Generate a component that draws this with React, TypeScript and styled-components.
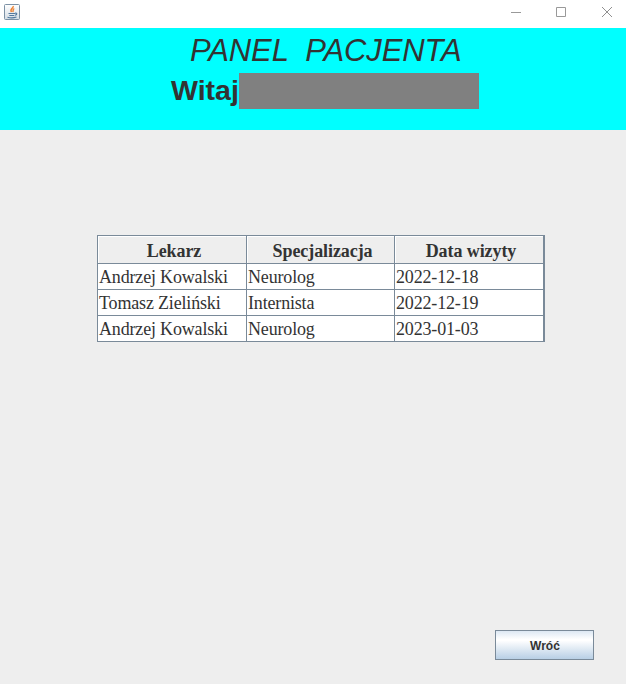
import React from "react";
import styled, { createGlobalStyle } from "styled-components";

const Global = createGlobalStyle`
  * { box-sizing: border-box; }
  body { margin: 0; background: #fff; overflow: hidden; }
`;

const Window = styled.div`
  width: 627px;
  height: 686px;
  display: flex;
  flex-direction: column;
  background: #fff;
  color: #333;
  font-family: "Liberation Sans", Arial, sans-serif;
`;

const TitleBar = styled.header`
  height: 28px;
  flex: none;
  display: flex;
  justify-content: space-between;
  padding: 4px 14px 0 4px;
`;

const Controls = styled.div`
  display: flex;
  gap: 34px;
  padding-top: 3px;
  svg { display: block; }
`;

const Content = styled.main`
  width: 626px;
  height: 656px;
  display: flex;
  flex-direction: column;
  background: #eee;
`;

const Banner = styled.section`
  height: 102px;
  flex: none;
  background: #00ffff;
`;

const Title = styled.h1`
  margin: 0;
  padding: 4px 0 0 190px;
  height: 45px;
  font-size: 31px;
  line-height: 37px;
  font-weight: 400;
  font-style: italic;
  letter-spacing: -0.12px;
  white-space: pre;
`;

const Greeting = styled.div`
  display: flex;
  padding-left: 171px;
  height: 36px;
  font-size: 28.5px;
  line-height: 35px;
  font-weight: 700;
`;

const GreetingText = styled.span`
  width: 68px;
  white-space: nowrap;
`;

const NameBox = styled.div`
  width: 240px;
  height: 36px;
  background: #808080;
`;

const Table = styled.div`
  width: 448px;
  height: 107px;
  margin: 105px 0 0 97px;
  border: solid #7a8a99;
  border-width: 1px 1px 0 1px;
  font-family: "Liberation Serif", "Times New Roman", serif;
  font-size: 18px;
`;

const Row = styled.div`
  display: grid;
  grid-template-columns: 149px 148px 149px;
`;

const HeaderCell = styled.div`
  height: 28px;
  border: solid #7a8a99;
  border-width: 0 1px 1px 0;
  box-shadow: inset 1px 1px #fff;
  padding-top: 1px;
  font-weight: 700;
  line-height: 28px;
  text-align: center;
  padding-left: 4px;
  letter-spacing: -0.08px;
`;

const Cell = styled.div`
  height: 26px;
  border: solid #7a8a99;
  border-width: 0 1px 1px 0;
  background: #fff;
  padding-left: 1px;
  line-height: 26px;
  letter-spacing: -0.17px;
  white-space: nowrap;
`;

const BackButton = styled.button`
  width: 99px;
  height: 30px;
  margin: auto 32px 24px auto;
  padding: 1px 0 0 1px;
  border: 1px solid #7a8a99;
  background: linear-gradient(#dde8f3 0%, #fff 30%, #fff 34%, #b8cfe5 100%);
  color: #333;
  font: 700 12px/28px "Liberation Sans", Arial, sans-serif;
`;

const JavaIcon = () => (
  <svg width="16" height="16" viewBox="0 0 16 16" fill="none">
    <defs>
      <linearGradient id="tile" x2="0" y2="1">
        <stop stopColor="#fff" />
        <stop offset="1" stopColor="#d5dde5" />
      </linearGradient>
    </defs>
    <rect x=".5" y=".5" width="15" height="15" rx="1" fill="url(#tile)" stroke="#7c91a5" />
    <path d="M9.2 2c.6 2.2-4 2.8-1.7 6M10.3 4.6C7.8 5.6 10.2 6.2 8.6 8" stroke="#ee7f2d" strokeWidth="1.4" />
    <path d="M4.5 9.5h6.5M5.3 11.5h5M11 9.2c2.6-.6 2.2 1.7 0 2.1M3.5 13.3c2.3.6 6.7.5 9-.3" stroke="#53799e" strokeWidth="1.1" />
  </svg>
);

const visits = [
  ["Andrzej Kowalski", "Neurolog", "2022-12-18"],
  ["Tomasz Zieliński", "Internista", "2022-12-19"],
  ["Andrzej Kowalski", "Neurolog", "2023-01-03"],
];

export default function App() {
  return (
    <>
      <Global />
      <Window>
        <TitleBar>
          <JavaIcon />
          <Controls>
            <svg width="10" height="11" stroke="#999"><path d="M0 5.5h10" /></svg>
            <svg width="12" height="11" stroke="#999" fill="none"><path d="M1.5.5h9v9h-9z" /></svg>
            <svg width="12" height="11" stroke="#909090"><path d="M1 0l10 10M11 0L1 10" /></svg>
          </Controls>
        </TitleBar>
        <Content>
          <Banner>
            <Title>PANEL  PACJENTA</Title>
            <Greeting>
              <GreetingText>Witaj</GreetingText>
              <NameBox />
            </Greeting>
          </Banner>
          <Table>
            <Row>
              {["Lekarz", "Specjalizacja", "Data wizyty"].map((h) => (
                <HeaderCell key={h}>{h}</HeaderCell>
              ))}
            </Row>
            {visits.map((visit, i) => (
              <Row key={i}>
                {visit.map((value) => (
                  <Cell key={value}>{value}</Cell>
                ))}
              </Row>
            ))}
          </Table>
          <BackButton>Wróć</BackButton>
        </Content>
      </Window>
    </>
  );
}
